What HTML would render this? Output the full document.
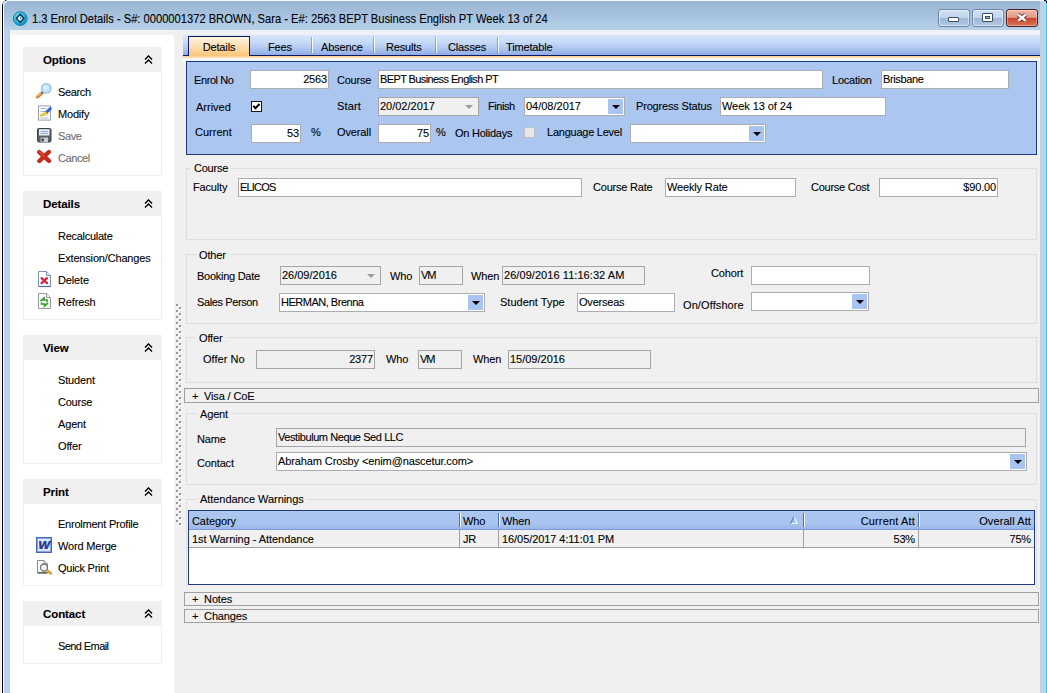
<!DOCTYPE html>
<html>
<head>
<meta charset="utf-8">
<title>1.3 Enrol Details</title>
<style>
*{box-sizing:border-box;margin:0;padding:0}
html,body{width:1047px;height:693px;overflow:hidden;background:#fff}
body{position:relative;font-family:"Liberation Sans",sans-serif;font-size:11px;color:#000;letter-spacing:-0.15px;-webkit-text-stroke:0.1px}
.abs,.l,.in,.gb,.gl,.bar,.cb,.sg,.sh,.si,.tab{position:absolute}
#win{position:absolute;left:2px;top:-1px;width:1050px;height:700px;border:1px solid #000;border-top-left-radius:7px;background:#b9d1ea;overflow:hidden}
#hl{position:absolute;left:0;top:0;width:1050px;height:700px;border-left:1px solid #fff;border-top:1px solid #fff;border-top-left-radius:6px}
#title{position:absolute;left:3px;top:1px;width:1044px;height:29px;background:linear-gradient(#9ab6d5,#a2bedb 35%,#adc9e4 75%,#b8d1e9)}
#ttext{position:absolute;left:32px;top:11px;font-size:12.4px;letter-spacing:0;transform-origin:0 50%;transform:scaleX(0.9);white-space:nowrap;line-height:16px}
#lframe{position:absolute;left:4px;top:30px;width:6px;height:670px;background:#b9d0ea}
#rframe{position:absolute;left:1040px;top:0;width:7px;height:700px;background:linear-gradient(90deg,#c6cbe8 0px,#c6cbe8 1px,#bdd0ec 1px,#bdd0ec 2px,#b3d5e6 2px,#b3d5e6 3px,#b2d9e4 3px,#b2d9e4 4px,#b3d8ec 4px,#b3d8ec 5px,#9fdbf4 5px,#9fdbf4 6px,#52c4e0 6px,#52c4e0 7px)}
#side{position:absolute;left:10px;top:35px;width:164px;height:670px;background:#fff;border-top-right-radius:3px}
#main{position:absolute;left:174px;top:30px;width:866px;height:670px;background:#f0f0f0}
.sh{left:23px;width:139px;height:25px;background:#f0f0f0;font-weight:bold;font-size:11.5px;letter-spacing:-0.1px;line-height:27px;padding-left:20px}
.sg{left:23px;width:139px;border:1px solid #f0f0f0;border-top:none;background:#fff}
.si{left:58px;white-space:nowrap;line-height:14px;margin-top:1px}
.dis{color:#6d6d6d}
.l{white-space:nowrap;line-height:14px}
.in{height:19px;border:1px solid #abadb3;background:#fff;line-height:17px;padding:0 2px 0 1px;white-space:nowrap;overflow:hidden}
.in.ro{background:#f0f0f0;border-color:#a5a5a5}
.in.r{text-align:right;padding-right:1px}
.gb{border:1px solid #dedede}
.gl{background:#f0f0f0;padding:0 3px;line-height:14px;white-space:nowrap}
.bar{left:184px;width:855px;height:15px;border:1px solid #a0a0a0;background:#f0f0f0;line-height:15px;padding-left:7px;white-space:nowrap}
.dd{position:absolute;right:1px;top:1px;width:15px;height:15px;background:#a9c4f0}
.dd:after{content:"";position:absolute;left:4px;top:6px;border:4px solid transparent;border-top:4px solid #000;border-bottom:none}
.dg:after{content:"";position:absolute;right:5px;top:7px;border:4px solid transparent;border-top:4px solid #9a9a9a;border-bottom:none}
.tab{top:37px;height:20px;line-height:21px;font-size:11px;text-align:center;white-space:nowrap}
.tsep{position:absolute;top:37px;width:1px;height:16px;background:linear-gradient(#fff,#eef3fc);box-shadow:-1px 0 0 rgba(90,120,190,.55)}
</style>
</head>
<body>
<div class="abs" style="left:0;top:0;width:1px;height:693px;background:#f1edea"></div>
<div id="win"></div>
<div id="title"></div>
<div id="hl" style="left:3px;top:0"></div>
<div id="lframe"></div>
<div id="rframe"></div>
<div class="abs" style="left:10px;top:30px;width:1030px;height:12px;background:#f2f2f3"></div>
<div id="side"></div>
<div id="main"></div>
<div id="ttext">1.3 Enrol Details - S#: 0000001372 BROWN, Sara - E#: 2563 BEPT Business English PT Week 13 of 24</div>
<!--SIDE-->
<div class="sh" style="top:47px">Options</div>
<svg class="abs" style="left:144px;top:55px" width="9" height="10" viewBox="0 0 9 10"><path d="M1 4.5 L4.5 1 L8 4.5 M1 8.5 L4.5 5 L8 8.5" fill="none" stroke="#000" stroke-width="1.4"/></svg>
<div class="sg" style="top:72px;height:104px"></div>
<div class="si " style="top:84px;letter-spacing:-0.36px">Search</div>
<div class="si " style="top:106px;letter-spacing:-0.18px">Modify</div>
<div class="si dis" style="top:128px;letter-spacing:-0.37px">Save</div>
<div class="si dis" style="top:150px;letter-spacing:-0.42px">Cancel</div>
<div class="sh" style="top:191px">Details</div>
<svg class="abs" style="left:144px;top:199px" width="9" height="10" viewBox="0 0 9 10"><path d="M1 4.5 L4.5 1 L8 4.5 M1 8.5 L4.5 5 L8 8.5" fill="none" stroke="#000" stroke-width="1.4"/></svg>
<div class="sg" style="top:216px;height:104px"></div>
<div class="si " style="top:228px;letter-spacing:-0.27px">Recalculate</div>
<div class="si " style="top:250px;letter-spacing:-0.17px">Extension/Changes</div>
<div class="si " style="top:272px">Delete</div>
<div class="si " style="top:294px">Refresh</div>
<div class="sh" style="top:335px">View</div>
<svg class="abs" style="left:144px;top:343px" width="9" height="10" viewBox="0 0 9 10"><path d="M1 4.5 L4.5 1 L8 4.5 M1 8.5 L4.5 5 L8 8.5" fill="none" stroke="#000" stroke-width="1.4"/></svg>
<div class="sg" style="top:360px;height:104px"></div>
<div class="si " style="top:372px">Student</div>
<div class="si " style="top:394px;letter-spacing:-0.24px">Course</div>
<div class="si " style="top:416px">Agent</div>
<div class="si " style="top:438px">Offer</div>
<div class="sh" style="top:479px">Print</div>
<svg class="abs" style="left:144px;top:487px" width="9" height="10" viewBox="0 0 9 10"><path d="M1 4.5 L4.5 1 L8 4.5 M1 8.5 L4.5 5 L8 8.5" fill="none" stroke="#000" stroke-width="1.4"/></svg>
<div class="sg" style="top:504px;height:82px"></div>
<div class="si " style="top:516px;letter-spacing:-0.23px">Enrolment Profile</div>
<div class="si " style="top:538px;letter-spacing:-0.18px">Word Merge</div>
<div class="si " style="top:560px;letter-spacing:-0.26px">Quick Print</div>
<div class="sh" style="top:601px">Contact</div>
<svg class="abs" style="left:144px;top:609px" width="9" height="10" viewBox="0 0 9 10"><path d="M1 4.5 L4.5 1 L8 4.5 M1 8.5 L4.5 5 L8 8.5" fill="none" stroke="#000" stroke-width="1.4"/></svg>
<div class="sg" style="top:626px;height:38px"></div>
<div class="si " style="top:638px;letter-spacing:-0.58px">Send Email</div>
<!--/SIDE-->
<!--MAIN-->
<div class="abs" style="left:183px;top:30px;width:857px;height:5px;background:#eff1f7"></div><div class="abs" style="left:183px;top:35px;width:857px;height:21px;background:linear-gradient(#d6e5fb,#c9dcf8 30%,#aec7f0 65%,#93b0e8 90%,#8ca9e6)"></div>
<div class="abs" style="left:183px;top:55px;width:857px;height:1px;background:#0e1762"></div>
<div class="abs" style="left:183px;top:56px;width:857px;height:2px;background:linear-gradient(#fdcc90,#fee0b8)"></div>
<div class="abs" style="left:183px;top:58px;width:857px;height:3px;background:#f8f8fb"></div>
<div class="tab" style="left:188px;top:36px;width:62px;height:20px;border:1px solid #111b68;border-bottom:none;background:linear-gradient(#fff3e0,#fee0b5 45%,#fdc478)">Details</div>
<div class="tab" style="left:268px">Fees</div>
<div class="tab" style="left:321px">Absence</div>
<div class="tab" style="left:386px">Results</div>
<div class="tab" style="left:448px">Classes</div>
<div class="tab" style="left:506px">Timetable</div>
<div class="tsep" style="left:312px"></div>
<div class="tsep" style="left:374px"></div>
<div class="tsep" style="left:436px"></div>
<div class="tsep" style="left:498px"></div>
<div class="abs" style="left:186px;top:61px;width:851px;height:94px;background:#abc6ef;border:1px solid #1b3a7e"></div>
<div class="l" style="left:194px;top:73px;letter-spacing:-0.41px">Enrol No</div>
<div class="in r" style="left:250px;top:70px;width:79px;height:19px">2563</div>
<div class="l" style="left:337px;top:73px;letter-spacing:-0.24px">Course</div>
<div class="in " style="left:378px;top:70px;width:445px;height:19px;letter-spacing:-0.6px">BEPT Business English PT</div>
<div class="l" style="left:832px;top:73px;letter-spacing:-0.24px">Location</div>
<div class="in " style="left:881px;top:70px;width:128px;height:19px;letter-spacing:-0.36px">Brisbane</div>
<div class="l" style="left:196px;top:100px;letter-spacing:-0.01px">Arrived</div>
<div class="abs" style="left:251px;top:101px;width:11px;height:11px;border:1px solid #151520;background:#fff"><svg width="9" height="9" viewBox="0 0 9 9" style="position:absolute;left:0;top:0"><path d="M1.4 3.8 L3.4 6.2 L7.6 2" fill="none" stroke="#000" stroke-width="2"/></svg></div>
<div class="l" style="left:337px;top:99px;letter-spacing:0.15px">Start</div>
<div class="in ro dg" style="left:378px;top:97px;width:101px;height:19px;letter-spacing:-0.01px">20/02/2017</div>
<div class="l" style="left:488px;top:99px;letter-spacing:-0.46px">Finish</div>
<div class="in " style="left:524px;top:97px;width:101px;height:19px;letter-spacing:-0.01px">04/08/2017<span class="dd"></span></div>
<div class="l" style="left:636px;top:99px;letter-spacing:-0.17px">Progress Status</div>
<div class="in " style="left:720px;top:97px;width:166px;height:19px;letter-spacing:-0.06px">Week 13 of 24</div>
<div class="l" style="left:195px;top:125px;letter-spacing:0.02px">Current</div>
<div class="in r" style="left:251px;top:124px;width:50px;height:19px">53</div>
<div class="l" style="left:311px;top:125px;">%</div>
<div class="l" style="left:337px;top:125px;letter-spacing:-0.12px">Overall</div>
<div class="in r" style="left:378px;top:124px;width:53px;height:19px">75</div>
<div class="l" style="left:436px;top:125px;">%</div>
<div class="l" style="left:455px;top:126px;letter-spacing:-0.25px">On Holidays</div>
<div class="abs" style="left:524px;top:127px;width:11px;height:11px;border:1px solid #bcc0c8;background:#e8e8e8"></div>
<div class="l" style="left:547px;top:125px;letter-spacing:-0.24px">Language Level</div>
<div class="in " style="left:630px;top:124px;width:136px;height:19px"><span class="dd"></span></div>
<div class="gb" style="left:186px;top:168px;width:851px;height:72px"></div>
<div class="gl" style="left:191px;top:161px;letter-spacing:-0.24px">Course</div>
<div class="l" style="left:193px;top:180px;letter-spacing:-0.17px">Faculty</div>
<div class="in " style="left:238px;top:178px;width:344px;height:19px;letter-spacing:-0.81px">ELICOS</div>
<div class="l" style="left:593px;top:180px;letter-spacing:-0.21px">Course Rate</div>
<div class="in " style="left:665px;top:178px;width:131px;height:19px;letter-spacing:-0.15px">Weekly Rate</div>
<div class="l" style="left:811px;top:180px;letter-spacing:-0.26px">Course Cost</div>
<div class="in r" style="left:879px;top:178px;width:119px;height:19px">$90.00</div>
<div class="gb" style="left:186px;top:254px;width:851px;height:70px"></div>
<div class="gl" style="left:196px;top:248px">Other</div>
<div class="l" style="left:197px;top:269px;letter-spacing:-0.27px">Booking Date</div>
<div class="in ro dg" style="left:280px;top:266px;width:101px;height:19px;letter-spacing:-0.01px">26/09/2016</div>
<div class="l" style="left:390px;top:269px;">Who</div>
<div class="in ro" style="left:419px;top:266px;width:44px;height:19px;letter-spacing:-1px">VM</div>
<div class="l" style="left:471px;top:269px;">When</div>
<div class="in ro" style="left:502px;top:266px;width:143px;height:19px;letter-spacing:0.06px">26/09/2016 11:16:32 AM</div>
<div class="l" style="left:711px;top:266px;">Cohort</div>
<div class="in " style="left:751px;top:266px;width:119px;height:19px"></div>
<div class="l" style="left:197px;top:295px;letter-spacing:-0.39px">Sales Person</div>
<div class="in " style="left:279px;top:293px;width:206px;height:19px;letter-spacing:-0.49px">HERMAN, Brenna<span class="dd"></span></div>
<div class="l" style="left:500px;top:295px;letter-spacing:-0.0px">Student Type</div>
<div class="in " style="left:577px;top:293px;width:98px;height:19px;letter-spacing:-0.21px">Overseas</div>
<div class="l" style="left:683px;top:298px;letter-spacing:0.1px">On/Offshore</div>
<div class="in " style="left:751px;top:292px;width:118px;height:19px"><span class="dd"></span></div>
<div class="gb" style="left:186px;top:337px;width:851px;height:46px"></div>
<div class="gl" style="left:196px;top:331px">Offer</div>
<div class="l" style="left:203px;top:352px;letter-spacing:0.04px">Offer No</div>
<div class="in ro r" style="left:256px;top:350px;width:119px;height:19px">2377</div>
<div class="l" style="left:386px;top:352px;">Who</div>
<div class="in ro" style="left:418px;top:350px;width:44px;height:19px;letter-spacing:-1px">VM</div>
<div class="l" style="left:473px;top:352px;">When</div>
<div class="in ro" style="left:508px;top:350px;width:143px;height:19px;letter-spacing:-0.01px">15/09/2016</div>
<div class="bar" style="top:388px">+&nbsp; Visa / CoE</div>
<div class="gb" style="left:186px;top:413px;width:851px;height:72px"></div>
<div class="gl" style="left:197px;top:407px">Agent</div>
<div class="l" style="left:197px;top:432px;">Name</div>
<div class="in ro" style="left:276px;top:428px;width:750px;height:19px;letter-spacing:-0.42px">Vestibulum Neque Sed LLC</div>
<div class="l" style="left:197px;top:456px;">Contact</div>
<div class="in " style="left:276px;top:452px;width:751px;height:19px;letter-spacing:-0.11px">Abraham Crosby &lt;enim@nascetur.com&gt;<span class="dd"></span></div>
<div class="gb" style="left:186px;top:499px;width:851px;height:89px;border-bottom:none"></div>
<div class="gl" style="left:197px;top:492px;letter-spacing:-0.06px">Attendance Warnings</div>
<div class="abs" style="left:188px;top:510px;width:847px;height:75px;border:1px solid #1b3a7e;background:#fff"></div>
<div class="abs" style="left:189px;top:511px;width:845px;height:19px;background:linear-gradient(#abc6ef,#a9c4ee 70%,#98b6ea);border-bottom:1px solid #7c9bdc"></div>
<div class="abs" style="left:189px;top:530px;width:845px;height:18px;background:#f0f0f0;border-bottom:1px solid #a0a0a0"></div>
<div class="abs" style="left:459px;top:513px;width:1px;height:14px;background:#5070b8;box-shadow:1px 0 0 #f2f6fd"></div>
<div class="abs" style="left:459px;top:530px;width:1px;height:17px;background:#a0a0a0"></div>
<div class="abs" style="left:498px;top:513px;width:1px;height:14px;background:#5070b8;box-shadow:1px 0 0 #f2f6fd"></div>
<div class="abs" style="left:498px;top:530px;width:1px;height:17px;background:#a0a0a0"></div>
<div class="abs" style="left:803px;top:513px;width:1px;height:14px;background:#5070b8;box-shadow:1px 0 0 #f2f6fd"></div>
<div class="abs" style="left:803px;top:530px;width:1px;height:17px;background:#a0a0a0"></div>
<div class="abs" style="left:918px;top:513px;width:1px;height:14px;background:#5070b8;box-shadow:1px 0 0 #f2f6fd"></div>
<div class="abs" style="left:918px;top:530px;width:1px;height:17px;background:#a0a0a0"></div>
<div class="l" style="left:192px;top:514px;letter-spacing:-0.08px">Category</div>
<div class="l" style="left:463px;top:514px;">Who</div>
<div class="l" style="left:502px;top:514px;">When</div>
<div class="l" style="left:0px;top:514px;left:auto;right:132px;letter-spacing:0.16px">Current Att</div>
<div class="l" style="left:0px;top:514px;left:auto;right:16px;letter-spacing:0.1px">Overall Att</div>
<div class="l" style="left:192px;top:532px;letter-spacing:-0.05px">1st Warning - Attendance</div>
<div class="l" style="left:463px;top:532px;">JR</div>
<div class="l" style="left:502px;top:532px;letter-spacing:-0.07px">16/05/2017 4:11:01 PM</div>
<div class="l" style="left:0px;top:532px;left:auto;right:132px">53%</div>
<div class="l" style="left:0px;top:532px;left:auto;right:16px">75%</div>
<svg class="abs" style="left:789px;top:515px" width="10" height="10" viewBox="0 0 10 10"><path d="M5 1.5 L8.2 8.5 L1.5 8.5" fill="none" stroke="#f4f8fe" stroke-width="1.1"/><path d="M1.5 8.7 L5 1.5" fill="none" stroke="#5a78bc" stroke-width="1.1"/></svg>
<div class="bar" style="top:592px;height:14px;line-height:13px">+&nbsp; Notes</div>
<div class="bar" style="top:609px;height:14px;line-height:13px">+&nbsp; Changes</div>
<svg class="abs" style="left:176px;top:304px" width="7" height="222" viewBox="0 0 7 222"><defs><pattern id="dots" width="7" height="6" patternUnits="userSpaceOnUse"><rect x="1" y="1" width="2" height="2" fill="#fff"/><rect x="4" y="4" width="2" height="2" fill="#fff"/><rect x="0" y="0" width="2" height="2" fill="#979797"/><rect x="3" y="3" width="2" height="2" fill="#979797"/></pattern></defs><rect width="7" height="222" fill="url(#dots)"/></svg>
<!--/MAIN-->
<!--TOP-->
<div class="abs" style="left:7px;top:0;width:1037px;height:1px;background:#f2fcfd"></div><div class="abs" style="left:1044px;top:0;width:2px;height:1px;background:#000"></div><div class="abs" style="left:1046px;top:1px;width:1px;height:2px;background:#000"></div>
<div class="abs" style="left:938px;top:9px;width:32px;height:18px;border:1px solid #6c86a8;border-radius:3px;background:linear-gradient(#d0dff1 0,#c2d5ec 48%,#9fb7d9 52%,#b1c8e5 100%);box-shadow:inset 0 0 0 1px rgba(255,255,255,.55)"></div>
<div class="abs" style="left:972px;top:9px;width:32px;height:18px;border:1px solid #6c86a8;border-radius:3px;background:linear-gradient(#d0dff1 0,#c2d5ec 48%,#9fb7d9 52%,#b1c8e5 100%);box-shadow:inset 0 0 0 1px rgba(255,255,255,.55)"></div>
<div class="abs" style="left:1006px;top:9px;width:32px;height:18px;border:1px solid #4a2020;border-radius:3px;background:linear-gradient(#efb7a9 0,#e29a86 46%,#cb452b 52%,#d8735a 100%);box-shadow:inset 0 0 0 1px rgba(255,255,255,.35)"></div>
<div class="abs" style="left:948px;top:17px;width:11px;height:5px;border:1px solid #3a4a60;border-radius:1px;background:#fff"></div>
<div class="abs" style="left:982px;top:13px;width:11px;height:9px;border:1px solid #3a4a60;border-radius:1px;background:#fff"></div>
<div class="abs" style="left:985px;top:16px;width:5px;height:3px;border:1px solid #3a4a60;background:#a9bedc"></div>
<svg class="abs" style="left:1015px;top:12px" width="14" height="12" viewBox="0 0 14 12"><path d="M3.2 2.6 L10.6 8.8 M10.6 2.6 L3.2 8.8" stroke="#5a2a26" stroke-width="4" fill="none"/><path d="M3.2 2.6 L10.6 8.8 M10.6 2.6 L3.2 8.8" stroke="#fff" stroke-width="2.5" fill="none"/></svg>
<svg class="abs" style="left:11px;top:10px" width="18" height="18" viewBox="0 0 18 18"><defs><radialGradient id="ig" cx="0.4" cy="0.35" r="0.7"><stop offset="0" stop-color="#7fe6f6"/><stop offset="0.6" stop-color="#27b3d6"/><stop offset="1" stop-color="#0f7fa6"/></radialGradient></defs><circle cx="9.2" cy="8.6" r="6.9" fill="url(#ig)" stroke="#128bb0" stroke-width="1"/><path d="M9.2 4.2 L13 8.3 L9.2 12.2 L5.4 8.3 Z" fill="none" stroke="#0a2a4a" stroke-width="1.3"/><circle cx="9" cy="8.5" r="1.9" fill="#fff"/><circle cx="9.5" cy="8" r="0.7" fill="#0a2a4a"/></svg>
<!--/TOP-->
<!--ICONS-->
<svg class="abs" style="left:35px;top:83px" width="18" height="17" viewBox="0 0 18 17"><path d="M2.6 13.8 L7 10" stroke="#d8853a" stroke-width="3.4" stroke-linecap="round"/><path d="M2.4 13 L6 9.9" stroke="#f2b880" stroke-width="1.2" stroke-linecap="round"/><path d="M6.8 10.2 L8 9.2" stroke="#6a5a50" stroke-width="2.2"/><circle cx="11.3" cy="5.4" r="4.8" fill="#c3e2f9" stroke="#94bcdc" stroke-width="1.1"/><circle cx="10.6" cy="4.6" r="2.4" fill="#dceffc"/></svg>
<svg class="abs" style="left:37px;top:105px" width="16" height="17" viewBox="0 0 16 17"><rect x="1.5" y="0.9" width="12" height="14.2" fill="#fff" stroke="#9a9ea6" stroke-width="1"/><path d="M3.5 3.5 H9 M3.5 6.5 H8 M3.5 10 H11.5 M3.5 13 H11.5" stroke="#a9b4cc" stroke-width="1"/><path d="M13.2 3.6 L9.6 7.2" stroke="#2c64c4" stroke-width="3.2" stroke-linecap="round"/><path d="M12.6 2.8 L9.4 6" stroke="#6a9ae8" stroke-width="1" stroke-linecap="round"/><path d="M8.8 8 L4 10.6" stroke="#f0c428" stroke-width="2.4" stroke-linecap="round"/></svg>
<svg class="abs" style="left:37px;top:128px" width="15" height="15" viewBox="0 0 15 15"><rect x="0.5" y="0.5" width="13.5" height="13.5" rx="1.2" fill="#5a5e66" stroke="#3e4148"/><rect x="2" y="1.2" width="10.5" height="6.3" fill="#e6eff8"/><path d="M3.5 3.5 H11 M3.5 5.5 H11" stroke="#8faac8" stroke-width="1"/><rect x="3.5" y="9.5" width="7.5" height="4.5" fill="#c8ccd2"/><rect x="4.5" y="10.5" width="2.2" height="3" fill="#3e4148"/></svg>
<svg class="abs" style="left:36px;top:149px" width="17" height="15" viewBox="0 0 17 15"><path d="M3.2 3.2 L13 11.8 M12.8 3 L3.4 12" stroke="#c62a1e" stroke-width="4.4" stroke-linecap="round"/><path d="M3.5 3 L8 7" stroke="#e2523f" stroke-width="1.4" stroke-linecap="round"/></svg>
<svg class="abs" style="left:37px;top:270px" width="15" height="18" viewBox="0 0 15 18"><path d="M1.5 1.5 H9.5 L13.5 5.5 V16.5 H1.5 Z" fill="#fff" stroke="#7a94b8" stroke-width="1"/><path d="M9.5 1.5 V5.5 H13.5" fill="#dfe8f4" stroke="#7a94b8" stroke-width="1"/><path d="M2 16.5 H13.5" stroke="#4a6a98" stroke-width="1.2"/><path d="M4.6 8.2 L10 13.2 M10 8.2 L4.6 13.2" stroke="#d02838" stroke-width="2.3" stroke-linecap="round"/></svg>
<svg class="abs" style="left:37px;top:292px" width="15" height="18" viewBox="0 0 15 18"><path d="M1.5 1.5 H9.5 L13.5 5.5 V16.5 H1.5 Z" fill="#fdfdfd" stroke="#9a9a9a" stroke-width="1"/><path d="M9.5 1.5 V5.5 H13.5" fill="#eee" stroke="#9a9a9a" stroke-width="1"/><path d="M3.5 9 L7 6 L7 8 L10 8 L10 10 M11 11 L7.5 14 L7.5 12 L4.5 12 L4.5 10.5" fill="none" stroke="#3aa030" stroke-width="1.7"/></svg>
<div class="abs" style="left:36px;top:537px;width:16px;height:16px;border:1px solid #4a66b4;background:#dbe8fc;box-shadow:inset 0 0 0 1px #86a4e4"></div>
<div class="abs" style="left:37px;top:538px;width:14px;height:14px;line-height:14px;text-align:center;font-weight:bold;font-style:italic;font-size:11px;color:#2a3c96;letter-spacing:0;transform:scaleX(1.12);text-shadow:0.4px 0 0 #2a3c96">W</div>
<svg class="abs" style="left:36px;top:559px" width="17" height="16" viewBox="0 0 17 16"><path d="M1.5 1.5 H8 L11.5 5 V13.5 H1.5 Z" fill="#fff" stroke="#8a8a8a" stroke-width="1"/><path d="M8 1.5 V5 H11.5" fill="none" stroke="#8a8a8a"/><path d="M1.5 14 H11.5" stroke="#505050" stroke-width="1.3"/><circle cx="8" cy="8.5" r="3.5" fill="#eef2f6" stroke="#707478" stroke-width="1.3"/><path d="M11.6 12 L14.8 14.3" stroke="#dba040" stroke-width="2.8" stroke-linecap="round"/></svg>
<!--/ICONS-->
</body>
</html>
